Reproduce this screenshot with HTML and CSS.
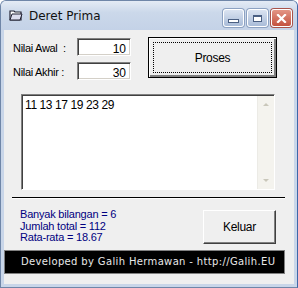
FILE: index.html
```html
<!DOCTYPE html>
<html lang="id">
<head>
  <meta charset="UTF-8">
  <title>Deret Prima</title>
  <link rel="stylesheet" href="styles.css">
</head>
<body>
  <div class="window">
    <div class="titlebar">
      <svg class="app-icon" width="14" height="13" viewBox="0 0 14 13">
        <path d="M1 2h4l1 1h6v8H1z" fill="#fff" stroke="#223" stroke-width="1.2"/>
        <path d="M3 5h10l-2 6H1z" fill="#dde" stroke="#223" stroke-width="1"/>
      </svg>
      <span class="title">Deret Prima</span>
      <div class="controls">
        <span class="ctl"><i class="min"></i></span>
        <span class="ctl"><i class="max"></i></span>
        <span class="ctl close">
          <svg width="11" height="9" viewBox="0 0 11 9">
            <path d="M2 1l7 7M9 1L2 8" stroke="#fff" stroke-width="2.2" stroke-linecap="square"/>
          </svg>
        </span>
      </div>
    </div>

    <div class="client">
      <div class="top">
        <div class="fields">
          <label class="field"><span>Nilai Awal&nbsp; :</span><span class="box">10</span></label>
          <label class="field"><span>Nilai Akhir :</span><span class="box">30</span></label>
        </div>
        <button class="btn proses"><span class="focus">Proses</span></button>
      </div>

      <div class="output">
        <div class="output-text">11 13 17 19 23 29</div>
        <div class="scroll">
          <span class="arrow up"></span>
          <span class="arrow down"></span>
        </div>
      </div>

      <hr class="sep">

      <div class="bottom">
        <div class="stats">
          <div>Banyak bilangan = 6</div>
          <div>Jumlah total = 112</div>
          <div>Rata-rata = 18.67</div>
        </div>
        <button class="btn keluar">Keluar</button>
      </div>

      <div class="credit">Developed by Galih Hermawan - http://Galih.EU</div>
    </div>
  </div>
</body>
</html>
```

FILE: styles.css
```css
html, body {
  margin: 0;
  padding: 0;
}
body {
  width: 298px;
  height: 288px;
  font-family: "Liberation Sans", Arial, sans-serif;
  font-size: 11px;
}
.window {
  width: 298px;
  height: 288px;
  box-sizing: border-box;
  border: 1px solid #6f86a8;
  border-right-color: #3f67a8;
  border-radius: 6px 6px 0 0;
  background: #c9d6e9;
  padding: 0 3px 3px 3px;
  display: flex;
  flex-direction: column;
  overflow: hidden;
}
.titlebar {
  height: 29px;
  display: flex;
  align-items: center;
  background: linear-gradient(#e4ebf5, #cbd8ea 40%, #c4d2e7);
  margin: 0 -3px;
  padding: 0 5px 0 8px;
}
.app-icon {
  margin-right: 6px;
}
.title {
  font-family: "DejaVu Sans", sans-serif;
  font-size: 12px;
  color: #111;
  flex: 1;
}
.controls {
  display: flex;
  gap: 3px;
  margin-top: 5px;
}
.ctl {
  width: 21px;
  height: 18px;
  box-sizing: border-box;
  border: 1px solid #fff;
  border-radius: 3px;
  background: linear-gradient(#dbe4f1, #a9bcd8);
  box-shadow: 0 0 0 1px #8da2c2;
  display: flex;
  align-items: center;
  justify-content: center;
}
.ctl .min {
  width: 9px;
  height: 2px;
  border: 1px solid #4a5f82;
  background: #fff;
  margin-top: 6px;
}
.ctl .max {
  width: 7px;
  height: 4px;
  border: 1px solid #4a5f82;
  border-top-width: 2px;
  background: #fff;
}
.ctl.close {
  background: linear-gradient(#e39585, #c4523f);
  box-shadow: 0 0 0 1px #a9534a;
}
.client {
  flex: 1;
  background: #efefef;
  padding: 8px 9px 0 9px;
  display: flex;
  flex-direction: column;
}
.top {
  display: flex;
  justify-content: space-between;
}
.fields {
  display: flex;
  flex-direction: column;
  gap: 6px;
}
.field {
  display: flex;
  align-items: center;
}
.field span:first-child {
  width: 64px;
  padding-top: 1px;
  letter-spacing: -0.3px;
}
.box {
  width: 54px;
  height: 18px;
  box-sizing: border-box;
  background: #fff;
  border: 1px solid;
  border-color: #808080 #fff #fff #808080;
  box-shadow: inset 1px 1px 0 #404040, inset -1px -1px 0 #d4d0c8;
  text-align: right;
  padding: 3px 4px 0 0;
  font-size: 12px;
}
.btn {
  font-family: "Liberation Sans", Arial, sans-serif;
  font-size: 12px;
  color: #000;
  background: #efefef;
  border: 1px solid;
  border-color: #fff #404040 #404040 #fff;
  box-shadow: inset -1px -1px 0 #808080;
  padding: 0;
  letter-spacing: -0.3px;
}
.proses {
  width: 129px;
  height: 41px;
  margin-right: 8px;
  margin-top: -1px;
  border: 1px solid #000;
  box-shadow: inset 1px 1px 0 #fff, inset -2px -2px 0 #808080;
  padding: 4px;
  display: flex;
}
.proses .focus {
  flex: 1;
  border: 1px dotted #000;
  display: flex;
  align-items: center;
  justify-content: center;
}
.output {
  margin: 14px 10px 0 8px;
  height: 96px;
  box-sizing: border-box;
  background: #fff;
  border: 1px solid;
  border-color: #808080 #fff #fff #808080;
  box-shadow: inset 1px 1px 0 #404040;
  display: flex;
}
.output-text {
  flex: 1;
  padding: 3px 0 0 3px;
  font-size: 12px;
  letter-spacing: -0.4px;
}
.scroll {
  width: 17px;
  margin: 1px 0 0 0;
  background: #f4f3ee;
  border-left: 1px solid #ecebe6;
  display: flex;
  flex-direction: column;
  justify-content: space-between;
  align-items: center;
  padding: 7px 0;
  box-sizing: border-box;
}
.arrow {
  width: 0;
  height: 0;
  border-left: 3px solid transparent;
  border-right: 3px solid transparent;
}
.arrow.up {
  border-bottom: 3px solid #c9c7ba;
}
.arrow.down {
  border-top: 3px solid #c9c7ba;
}
.sep {
  margin: 7px 0 0 -1px;
  border: 0;
  border-top: 1px solid #000;
  border-bottom: 1px solid #fff;
  height: 0;
  width: 273px;
}
.bottom {
  display: flex;
  justify-content: space-between;
  margin-top: 9px;
  padding-left: 7px;
}
.stats {
  color: #000080;
  font-size: 11px;
  line-height: 11.5px;
  letter-spacing: -0.2px;
  padding-top: 1px;
}
.keluar {
  width: 73px;
  height: 34px;
  margin-right: 9px;
  margin-top: 2px;
}
.credit {
  margin: 6px 0 0 -9px;
  width: 281px;
  height: 24px;
  box-sizing: border-box;
  background: #000;
  color: #e8e8e8;
  font-family: "DejaVu Sans", sans-serif;
  font-size: 10px;
  letter-spacing: 0.35px;
  padding: 5px 0 0 16px;
  border: 1px solid #808080;
}
```
